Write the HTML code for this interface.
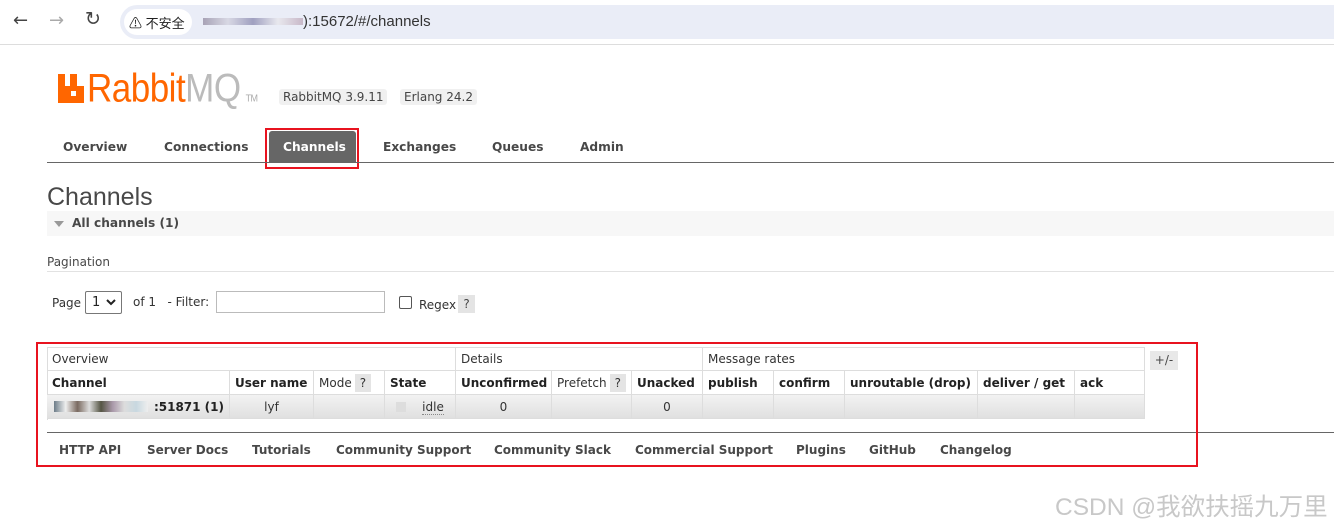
<!DOCTYPE html>
<html><head><meta charset="utf-8"><style>
*{margin:0;padding:0;box-sizing:border-box}
body{width:1334px;height:526px;background:#fff;position:relative;overflow:hidden;font-family:"DejaVu Sans","Liberation Sans",sans-serif;color:#484848}
.a{position:absolute;white-space:nowrap}
.nav{font-size:12.2px;font-weight:bold;color:#484848;top:140px}
.th,.td{position:absolute;font-size:12px;height:24px;line-height:25px;padding-left:5px;border-right:1px solid #ddd;border-bottom:1px solid #ddd;color:#333}
.b{font-weight:bold;color:#222}
.td{background:linear-gradient(#f2f2f2,#e0e0e0);text-align:center;padding:0}
.q{display:inline-block;background:#e4e4e4;padding:0 5px;line-height:18px;margin-left:3px}
.ft{font-size:12px;font-weight:bold;color:#484848;top:443px}
</style></head><body>
<div class="a" style="left:0;top:0;width:1334px;height:45px;background:#fff;border-bottom:1px solid #ddd"></div>
<div class="a" style="left:120px;top:5px;width:1214px;height:34px;background:#eaedf7;border-radius:17px 0 0 17px"></div>
<div class="a" style="left:124px;top:9px;width:68px;height:26px;background:#fff;border-radius:13px"></div>
<div class="a" style="left:13px;top:10px;font-size:18px;color:#444">&#8592;</div>
<div class="a" style="left:49px;top:10px;font-size:18px;color:#aaa">&#8594;</div>
<div class="a" style="left:85px;top:8px;font-size:19px;color:#444">&#8635;</div>
<div class="a" style="left:129px;top:13px;font-size:13px;color:#222;font-family:'Liberation Sans','Noto Sans CJK SC',sans-serif">&#9888; 不安全</div>
<div class="a" style="left:203px;top:18px;width:100px;height:7px;background:linear-gradient(90deg,#a8a3b6,#d8d8e4,#a0a0c0,#e8e8ee,#c8b8c8)"></div>
<div class="a" style="left:303px;top:13px;font-size:15px;color:#333;font-family:'Liberation Sans',sans-serif">):15672/#/channels</div>
<svg class="a" style="left:58px;top:74px" width="26" height="29" viewBox="0 0 26 29"><path d="M0 0h7v12h5V0h7v12h7v17H0z M13 17v5h5v-5z" fill="#f60" fill-rule="evenodd"/></svg>
<div class="a" style="left:87px;top:66px;font-size:35px;color:#f60;font-family:'Liberation Sans',sans-serif;letter-spacing:-0.5px;transform:scaleY(1.15);transform-origin:0 0">Rabbit<span style="color:#bbb">MQ</span><span style="font-size:9px;color:#aaa;margin-left:5px">TM</span></div>
<div class="a" style="left:279px;top:89px;font-size:12px;background:#f0f0f0;padding:1px 4px;color:#444;border-radius:3px">RabbitMQ 3.9.11</div>
<div class="a" style="left:400px;top:89px;font-size:12px;background:#f0f0f0;padding:1px 4px;color:#444;border-radius:3px">Erlang 24.2</div>
<div class="a nav" style="left:63px">Overview</div>
<div class="a nav" style="left:164px">Connections</div>
<div class="a" style="left:269px;top:131px;width:87px;height:31px;background:#666;border-radius:3px 3px 0 0"></div>
<div class="a nav" style="left:283px;color:#fff">Channels</div>
<div class="a" style="left:265px;top:128px;width:94px;height:41px;border:2px solid #e8131f"></div>
<div class="a nav" style="left:383px">Exchanges</div>
<div class="a nav" style="left:492px">Queues</div>
<div class="a nav" style="left:580px">Admin</div>
<div class="a" style="left:47px;top:162px;width:1287px;height:1px;background:#666"></div>
<div class="a" style="left:47px;top:183px;font-size:25px;color:#484848;font-family:'Liberation Sans',sans-serif">Channels</div>
<div class="a" style="left:47px;top:211px;width:1287px;height:25px;background:#f7f7f7"></div>
<div class="a" style="left:54px;top:221px;width:0;height:0;border-left:5px solid transparent;border-right:5px solid transparent;border-top:6px solid #999"></div>
<div class="a" style="left:72px;top:216px;font-size:12.2px;font-weight:bold;color:#484848">All channels (1)</div>
<div class="a" style="left:47px;top:255px;font-size:12px;color:#484848">Pagination</div>
<div class="a" style="left:47px;top:271px;width:1287px;height:1px;background:#e2e2e2"></div>
<div class="a" style="left:52px;top:296px;font-size:12px;color:#333">Page</div>
<div class="a" style="left:85px;top:291px;width:37px;height:23px;border:1px solid #777;border-radius:2px;font-size:13px;line-height:21px;padding-left:6px;color:#222">1</div>
<svg class="a" style="left:106px;top:299px" width="10" height="7" viewBox="0 0 10 7"><path d="M1 1l4 4 4-4" fill="none" stroke="#222" stroke-width="2"/></svg>
<div class="a" style="left:133px;top:295px;font-size:12px;color:#333">of 1 &nbsp;&nbsp;- Filter:</div>
<div class="a" style="left:216px;top:291px;width:169px;height:22px;border:1px solid #bbb"></div>
<div class="a" style="left:399px;top:296px;width:13px;height:13px;border:1px solid #555;border-radius:2px"></div>
<div class="a" style="left:419px;top:298px;font-size:12px;color:#333">Regex</div>
<div class="a" style="left:458px;top:295px;width:17px;height:18px;background:#e4e4e4;font-size:12px;text-align:center;line-height:18px">?</div>
<div class="a" style="left:47px;top:347px;width:1098px;height:73px;border-top:1px solid #ddd;border-left:1px solid #ddd"></div>
<div class="th" style="left:47px;top:347px;width:409px">Overview</div>
<div class="th" style="left:456px;top:347px;width:247px">Details</div>
<div class="th" style="left:703px;top:347px;width:442px">Message rates</div>
<div class="a" style="left:1150px;top:351px;width:28px;height:19px;background:#e8e8e8;font-size:12px;text-align:center;line-height:19px">+/-</div>
<div class="th b" style="left:47px;top:371px;width:183px">Channel</div>
<div class="th b" style="left:230px;top:371px;width:84px">User name</div>
<div class="th" style="left:314px;top:371px;width:71px">Mode<span class="q">?</span></div>
<div class="th b" style="left:385px;top:371px;width:71px">State</div>
<div class="th b" style="left:456px;top:371px;width:96px">Unconfirmed</div>
<div class="th" style="left:552px;top:371px;width:80px">Prefetch<span class="q">?</span></div>
<div class="th b" style="left:632px;top:371px;width:71px">Unacked</div>
<div class="th b" style="left:703px;top:371px;width:71px">publish</div>
<div class="th b" style="left:774px;top:371px;width:71px">confirm</div>
<div class="th b" style="left:845px;top:371px;width:133px">unroutable (drop)</div>
<div class="th b" style="left:978px;top:371px;width:97px">deliver / get</div>
<div class="th b" style="left:1075px;top:371px;width:70px">ack</div>
<div class="td b" style="left:47px;top:395px;width:183px;text-align:right;padding-right:5px">:51871 (1)</div>
<div class="a" style="left:54px;top:401px;width:94px;height:11px;background:linear-gradient(90deg,#6c7c88,#eee,#7a6a60,#ddd,#554,#a9a,#ddd,#c8d8e0,#eee)"></div>
<div class="td" style="left:230px;top:395px;width:84px">lyf</div>
<div class="td" style="left:314px;top:395px;width:71px"></div>
<div class="td" style="left:385px;top:395px;width:71px"><span style="display:inline-block;width:10px;height:10px;background:#ddd;margin-right:16px;vertical-align:-1px"></span><span style="border-bottom:1px dotted #888">idle</span></div>
<div class="td" style="left:456px;top:395px;width:96px">0</div>
<div class="td" style="left:552px;top:395px;width:80px"></div>
<div class="td" style="left:632px;top:395px;width:71px">0</div>
<div class="td" style="left:703px;top:395px;width:71px"></div>
<div class="td" style="left:774px;top:395px;width:71px"></div>
<div class="td" style="left:845px;top:395px;width:133px"></div>
<div class="td" style="left:978px;top:395px;width:97px"></div>
<div class="td" style="left:1075px;top:395px;width:70px"></div>
<div class="a" style="left:47px;top:432px;width:1287px;height:1px;background:#666"></div>
<div class="a ft" style="left:59px">HTTP API</div>
<div class="a ft" style="left:147px">Server Docs</div>
<div class="a ft" style="left:252px">Tutorials</div>
<div class="a ft" style="left:336px">Community Support</div>
<div class="a ft" style="left:494px">Community Slack</div>
<div class="a ft" style="left:635px">Commercial Support</div>
<div class="a ft" style="left:796px">Plugins</div>
<div class="a ft" style="left:869px">GitHub</div>
<div class="a ft" style="left:940px">Changelog</div>
<div class="a" style="left:36px;top:342px;width:1162px;height:125px;border:2px solid #e8131f"></div>
<div class="a" style="left:1055px;top:488px;font-size:24.5px;color:#c8c8c8;font-family:'Liberation Sans','Noto Sans CJK SC',sans-serif">CSDN @我欲扶摇九万里</div>
</body></html>
